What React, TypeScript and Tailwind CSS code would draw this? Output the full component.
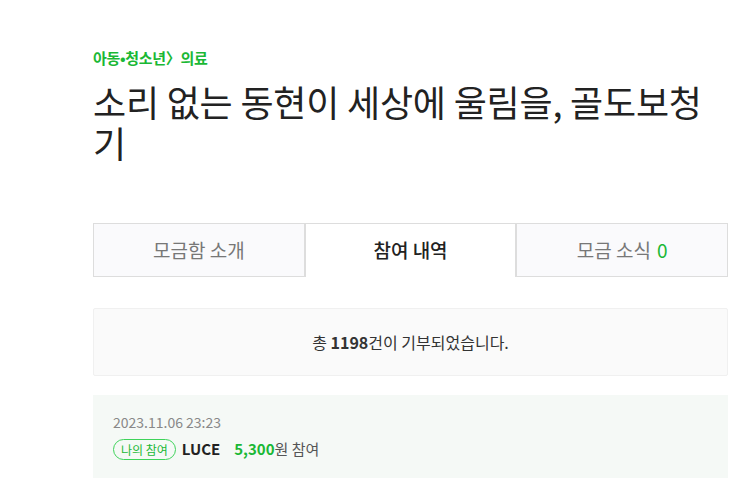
const FONT = { fontFamily: '"Noto Sans CJK KR", "Noto Sans", sans-serif' };

export default function App() {
  const tabs = [
    { id: 'intro', label: '모금함 소개' },
    { id: 'history', label: '참여 내역', active: true },
    { id: 'news', label: '모금 소식', count: 0 },
  ];

  return (
    <div className="min-h-[500px] bg-white pl-[93px] pr-[15px] pt-[46px]" style={FONT}>
      <div className="w-[635px]">
        <div className="text-[15px] font-bold leading-[24px] tracking-[-0.3px] text-[#1ab835]">
          아동•청소년〉의료
        </div>
        <h1 className="mt-[11px] pr-[8px] text-[36px] font-normal leading-[41px] tracking-[-0.2px] text-[#222]">
          소리 없는 동현이 세상에 울림을, 골도보청기
        </h1>

        <div className="mt-[60px] flex">
          {tabs.map((tab) =>
            tab.active ? (
              <div
                key={tab.id}
                className="flex h-[54px] flex-1 items-center justify-center border-x border-t border-[#ddd] bg-white text-[19px] font-medium text-[#222]"
              >
                {tab.label}
              </div>
            ) : (
              <div
                key={tab.id}
                className="flex h-[54px] flex-1 items-center justify-center border border-[#ddd] bg-[#fafafc] text-[19px] text-[#777]"
              >
                {tab.label}
                {tab.count !== undefined && <span className="ml-[6px] text-[#1ab835]">{tab.count}</span>}
              </div>
            )
          )}
        </div>

        <div className="mt-[31px] flex h-[68px] items-center justify-center rounded-[2px] border border-[#f0f0f0] bg-[#fafafa] text-[16px] text-[#333]">
          총&nbsp;<span className="font-bold">1198</span>건이 기부되었습니다.
        </div>

        <div className="mt-[19px] bg-[#f5f9f6] pb-[17px] pl-[20px] pr-[17px] pt-[17px]">
          <div className="text-[14px] leading-[20px] text-[#888]">2023.11.06 23:23</div>
          <div className="mt-[6px] flex items-center">
            <span className="rounded-full border border-[#3ed35a] px-[7px] text-[12px] leading-[19px] text-[#1ab835]">
              나의 참여
            </span>
            <span className="ml-[6px] text-[15px] font-bold text-[#222]">LUCE</span>
            <span className="ml-[14px] text-[15px] font-bold text-[#1ab835]">5,300</span>
            <span className="text-[15px] text-[#555]">원 참여</span>
          </div>
        </div>
      </div>
    </div>
  );
}
